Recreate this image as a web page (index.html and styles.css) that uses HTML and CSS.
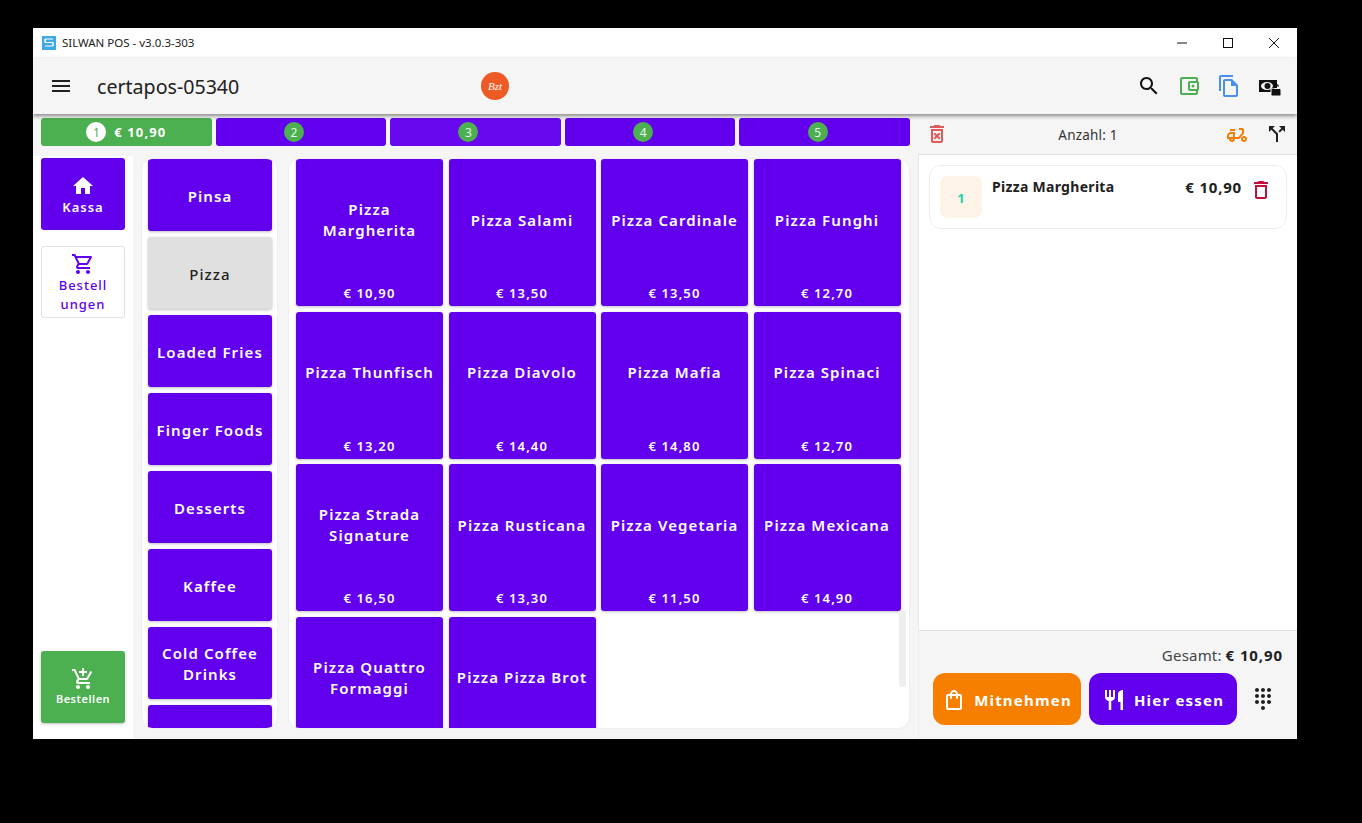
FILE: index.html
```html
<!DOCTYPE html>
<html lang="de">
<head>
  <meta charset="UTF-8" />
  <meta name="viewport" content="width=device-width, initial-scale=1"/>
  <title>SILWAN POS</title>
  <link rel="stylesheet" href="styles.css">
</head>
<body>

<div class="window">

  <!-- Title bar -->
  <div class="titlebar">
    <svg class="app-icon" viewBox="0 0 14 14">
      <rect width="14" height="14" fill="#3fa9e8"/>
      <path d="M11 3H3v3.500h8v3.500H3M3 3v3.500M11 6.500v3.500" fill="none" stroke="#fff" stroke-width="1"/>
    </svg>
    <span class="app-name">SILWAN POS - v3.0.3-303</span>
    <div class="win-btns">
      <div class="win-btn"><svg viewBox="0 0 12 12"><path d="M1 6h10" stroke="#111" fill="none"/></svg></div>
      <div class="win-btn"><svg viewBox="0 0 12 12"><rect x="1.500" y="1.500" width="9" height="9" stroke="#111" fill="none"/></svg></div>
      <div class="win-btn"><svg viewBox="0 0 12 12"><path d="M1 1l10 10M11 1L1 11" stroke="#111" fill="none"/></svg></div>
    </div>
  </div>

  <!-- App bar -->
  <div class="appbar">
    <div class="menu-btn">
      <svg class="ic" viewBox="0 0 24 24"><path d="M3 18h18v-2H3v2zm0-5h18v-2H3v2zm0-7v2h18V6H3z"/></svg>
    </div>
    <div class="shop-name">certapos-05340</div>
    <div class="shop-logo">Bzt</div>
    <div class="bar-icons">
      <div class="bar-icon"><svg class="ic" viewBox="0 0 24 24"><path d="M15.500 14h-.79l-.28-.27C15.410 12.590 16 11.110 16 9.500 16 5.910 13.090 3 9.500 3S3 5.910 3 9.500 5.910 16 9.500 16c1.610 0 3.090-.59 4.230-1.570l.27.28v.79l5 4.990L20.490 19l-4.990-5zm-6 0C7.010 14 5 11.990 5 9.500S7.010 5 9.500 5 14 7.010 14 9.500 11.990 14 9.500 14z"/></svg></div>
      <div class="bar-icon green"><svg class="ic" viewBox="0 0 24 24"><path d="M21 7.280V5c0-1.100-.9-2-2-2H5c-1.110 0-2 .9-2 2v14c0 1.100.89 2 2 2h14c1.100 0 2-.9 2-2v-2.280c.59-.35 1-.98 1-1.720V9c0-.74-.41-1.380-1-1.720zM20 9v6h-7V9h7zM5 19V5h14v2h-6c-1.100 0-2 .9-2 2v6c0 1.100.9 2 2 2h6v2H5z"/><circle cx="16" cy="12" r="1.500"/></svg></div>
      <div class="bar-icon blue"><svg class="ic" viewBox="0 0 24 24"><path d="M16 1H4c-1.100 0-2 .9-2 2v14h2V3h12V1zm-1 4H8c-1.100 0-1.990.9-1.990 2L6 21c0 1.100.89 2 1.990 2H19c1.100 0 2-.9 2-2V11l-6-6zM8 21V7h6v5h5v9H8z"/></svg></div>
      <div class="bar-icon"><svg class="ic" viewBox="0 0 24 24"><rect x="2" y="6" width="18" height="12"/><ellipse cx="10" cy="12" rx="6" ry="4" fill="#f5f5f5"/><circle cx="10.500" cy="12" r="3"/><rect x="14" y="14.500" width="10" height="7.500" rx="1.500" stroke="#f5f5f5" stroke-width="1"/><path d="M16.500 14.500v-1.200a2.500 2.500 0 0 1 4.900-.7" fill="none" stroke="#111" stroke-width="1.400"/></svg></div>
    </div>
  </div>

  <div class="main">

    <!-- Order tabs + catalogue -->
    <div class="left">
      <div class="tabs">
        <div class="tab tab-on"><span class="tab-num num-on">1</span><span class="tab-sum">€ 10,90</span></div>
        <div class="tab"><span class="tab-num">2</span><span class="tab-sum"></span></div>
        <div class="tab tab-light"><span class="tab-num">3</span><span class="tab-sum"></span></div>
        <div class="tab"><span class="tab-num">4</span><span class="tab-sum"></span></div>
        <div class="tab"><span class="tab-num">5</span><span class="tab-sum"></span></div>
      </div>

      <div class="content">
        <div class="nav">
          <div class="nav-btn nav-active">
            <svg class="ic" viewBox="0 0 24 24"><path d="M10 20v-6h4v6h5v-8h3L12 3 2 12h3v8z"/></svg>
            <span>Kassa</span>
          </div>
          <div class="nav-btn nav-plain">
            <svg class="ic" viewBox="0 0 24 24"><path d="M15.550 13c.75 0 1.410-.41 1.750-1.030l3.580-6.490c.37-.66-.11-1.480-.87-1.480H5.210l-.94-2H1v2h2l3.600 7.590-1.350 2.440C4.520 15.370 5.480 17 7 17h12v-2H7l1.100-2h7.450zM6.160 6h12.150l-2.760 5H8.530L6.160 6zM7 18c-1.100 0-1.990.9-1.990 2S5.900 22 7 22s2-.9 2-2-.9-2-2-2zm10 0c-1.100 0-1.990.9-1.990 2s.89 2 1.990 2 2-.9 2-2-.9-2-2-2z"/></svg>
            <span>Bestell<br>ungen</span>
          </div>
          <div class="nav-btn nav-order">
            <svg class="ic" viewBox="0 0 24 24"><path d="M11 9h2V6h3V4h-3V1h-2v3H8v2h3v3zm-4 9c-1.100 0-1.990.9-1.990 2S5.900 22 7 22s2-.9 2-2-.9-2-2-2zm10 0c-1.100 0-1.990.9-1.990 2s.89 2 1.990 2 2-.9 2-2-.9-2-2-2zm-9.830-3.250l.03-.12.9-1.630h7.450c.75 0 1.410-.41 1.750-1.030l3.860-7.010L19.420 4h-.01l-1.100 2-2.760 5H8.530l-.13-.27L6.160 6l-.95-2-.94-2H1v2h2l3.600 7.590-1.350 2.450c-.16.28-.25.61-.25.96 0 1.100.9 2 2 2h12v-2H7.420c-.13 0-.25-.11-.25-.25z"/></svg>
            <span>Bestellen</span>
          </div>
        </div>

        <div class="cats">
          <div class="cat">Pinsa</div>
          <div class="cat cat-active">Pizza</div>
          <div class="cat">Loaded Fries</div>
          <div class="cat">Finger Foods</div>
          <div class="cat">Desserts</div>
          <div class="cat">Kaffee</div>
          <div class="cat">Cold Coffee Drinks</div>
          <div class="cat"></div>
        </div>

        <div class="products">
          <div class="grid">
            <div class="prod"><div class="prod-name">Pizza Margherita</div><div class="prod-price">€ 10,90</div></div>
            <div class="prod"><div class="prod-name">Pizza Salami</div><div class="prod-price">€ 13,50</div></div>
            <div class="prod"><div class="prod-name">Pizza Cardinale</div><div class="prod-price">€ 13,50</div></div>
            <div class="prod"><div class="prod-name">Pizza Funghi</div><div class="prod-price">€ 12,70</div></div>
            <div class="prod"><div class="prod-name">Pizza Thunfisch</div><div class="prod-price">€ 13,20</div></div>
            <div class="prod"><div class="prod-name">Pizza Diavolo</div><div class="prod-price">€ 14,40</div></div>
            <div class="prod"><div class="prod-name">Pizza Mafia</div><div class="prod-price">€ 14,80</div></div>
            <div class="prod"><div class="prod-name">Pizza Spinaci</div><div class="prod-price">€ 12,70</div></div>
            <div class="prod"><div class="prod-name">Pizza Strada Signature</div><div class="prod-price">€ 16,50</div></div>
            <div class="prod"><div class="prod-name">Pizza Rusticana</div><div class="prod-price">€ 13,30</div></div>
            <div class="prod"><div class="prod-name">Pizza Vegetaria</div><div class="prod-price">€ 11,50</div></div>
            <div class="prod"><div class="prod-name">Pizza Mexicana</div><div class="prod-price">€ 14,90</div></div>
            <div class="prod"><div class="prod-name">Pizza Quattro Formaggi</div></div>
            <div class="prod"><div class="prod-name">Pizza Pizza Brot</div></div>
          </div>
          <div class="scroll-thumb"></div>
        </div>
      </div>
    </div>

    <!-- Cart -->
    <div class="cart">
      <div class="cart-head">
        <svg class="ic cart-clear" viewBox="0 0 24 24"><path d="M14.120 10.470L12 12.590l-2.130-2.120-1.410 1.410L10.590 14l-2.120 2.120 1.410 1.410L12 15.410l2.120 2.120 1.410-1.410L13.410 14l2.120-2.120zM15.500 4l-1-1h-5l-1 1H5v2h14V4zM6 19c0 1.100.9 2 2 2h8c1.100 0 2-.9 2-2V7H6v12zM8 9h8v10H8V9z"/></svg>
        <div class="cart-count">Anzahl: 1</div>
        <svg class="ic cart-moped" viewBox="0 0 24 24"><path d="M19 7c0-1.100-.9-2-2-2h-3v2h3v2.650L13.520 14H10V9H6c-2.210 0-4 1.790-4 4v3h2c0 1.660 1.340 3 3 3s3-1.340 3-3h4.480L19 10.350V7zM4 14v-1c0-1.100.9-2 2-2h2v3H4zm3 3c-.55 0-1-.45-1-1h2c0 .55-.45 1-1 1zM5 6h5v2H5zM19 13c-1.660 0-3 1.340-3 3s1.340 3 3 3 3-1.340 3-3-1.340-3-3-3zm0 4c-.55 0-1-.45-1-1s.45-1 1-1 1 .45 1 1-.45 1-1 1z"/></svg>
        <svg class="ic cart-split" viewBox="0 0 24 24"><path d="M14 4l2.290 2.290-2.880 2.880 1.420 1.420 2.880-2.880L20 10V4zm-4 0H4v6l2.290-2.290 4.710 4.700V20h2v-8.410l-5.290-5.300z"/></svg>
      </div>

      <div class="cart-list">
        <div class="item">
          <div class="item-qty">1</div>
          <div class="item-name">Pizza Margherita</div>
          <div class="item-price">€ 10,90</div>
          <svg class="ic item-del" viewBox="0 0 24 24"><path d="M6 19c0 1.100.9 2 2 2h8c1.100 0 2-.9 2-2V7H6v12zM8 9h8v10H8V9zm7.500-5l-1-1h-5l-1 1H5v2h14V4z"/></svg>
        </div>
      </div>

      <div class="cart-foot">
        <div class="total"><span class="total-label">Gesamt:</span> <b>€ 10,90</b></div>
        <div class="actions">
          <div class="act act-take">
            <svg class="ic" viewBox="0 0 24 24"><path d="M18 6h-2c0-2.210-1.790-4-4-4S8 3.790 8 6H6c-1.100 0-2 .9-2 2v12c0 1.100.9 2 2 2h12c1.100 0 2-.9 2-2V8c0-1.100-.9-2-2-2zm-6-2c1.100 0 2 .9 2 2h-4c0-1.100.9-2 2-2zm6 16H6V8h2v2c0 .55.45 1 1 1s1-.45 1-1V8h4v2c0 .55.45 1 1 1s1-.45 1-1V8h2v12z"/></svg>
            <span>Mitnehmen</span>
          </div>
          <div class="act act-here">
            <svg class="ic" viewBox="0 0 24 24"><path d="M11 9H9V2H7v7H5V2H3v7c0 2.120 1.660 3.840 3.750 3.970V22h2.500v-9.030C11.340 12.840 13 11.120 13 9V2h-2v7zm5-3v8h2.500v8H21V2c-2.760 0-5 2.240-5 4z"/></svg>
            <span>Hier essen</span>
          </div>
          <svg class="ic dialpad" viewBox="0 0 24 24"><path d="M12 19c-1.100 0-2 .9-2 2s.9 2 2 2 2-.9 2-2-.9-2-2-2zM6 1c-1.100 0-2 .9-2 2s.9 2 2 2 2-.9 2-2-.9-2-2-2zm0 6c-1.100 0-2 .9-2 2s.9 2 2 2 2-.9 2-2-.9-2-2-2zm0 6c-1.100 0-2 .9-2 2s.9 2 2 2 2-.9 2-2-.9-2-2-2zm12-8c1.100 0 2-.9 2-2s-.9-2-2-2-2 .9-2 2 .9 2 2 2zm-6 8c-1.100 0-2 .9-2 2s.9 2 2 2 2-.9 2-2-.9-2-2-2zm6 0c-1.100 0-2 .9-2 2s.9 2 2 2 2-.9 2-2-.9-2-2-2zm0-6c-1.100 0-2 .9-2 2s.9 2 2 2 2-.9 2-2-.9-2-2-2zm-6 0c-1.100 0-2 .9-2 2s.9 2 2 2 2-.9 2-2-.9-2-2-2zm0-6c-1.100 0-2 .9-2 2s.9 2 2 2 2-.9 2-2-.9-2-2-2z"/></svg>
        </div>
      </div>
    </div>

  </div>
</div>

</body>
</html>
```

FILE: styles.css
```css
html, body { height:100%; }
body {
  margin:0; background:#000; overflow:hidden;
  padding:28px 0 0 33px; box-sizing:border-box;
  font-family:"Noto Sans", sans-serif; color:#212121;
}
.ic { width:24px; height:24px; fill:currentColor; display:block; flex:none; }

.window {
  width:1264px; height:711px; background:#f5f5f5;
  display:flex; flex-direction:column; overflow:hidden;
}

/* title bar */
.titlebar { height:30px; background:#fff; display:flex; align-items:center; padding-left:9px; flex:none; }
.app-icon { width:14px; height:14px; margin-right:6px; }
.app-name { font-size:11.500px; color:#222; padding-bottom:1px; }
.win-btns { margin-left:auto; display:flex; }
.win-btn { width:46px; height:30px; display:flex; align-items:center; justify-content:center; }
.win-btn svg { width:12px; height:12px; }

/* app bar */
.appbar {
  height:56px; background:#f5f5f5; display:flex; align-items:center; flex:none;
  box-shadow:0 2px 4px rgba(0,0,0,0.45); position:relative;
}
.menu-btn { width:24px; margin:0 24px 0 16px; color:#212121; }
.shop-name { width:384px; font-size:19.600px; color:#212121; padding-top:1px; }
.shop-logo {
  width:28px; height:28px; border-radius:50%; background:#ee5a24; color:#fff;
  font:italic 11px "Liberation Serif", serif; display:flex; align-items:center; justify-content:center;
}
.bar-icons { margin-left:auto; display:flex; padding-right:8px; color:#111; }
.bar-icon { width:40px; display:flex; justify-content:center; }
.green { color:#4caf50; }
.blue { color:#4a8fef; }

.main { flex:1; display:flex; min-height:0; }
.left { width:885px; display:flex; flex-direction:column; flex:none; }

/* order tabs */
.tabs { display:flex; gap:4px; padding:4px 8px 0; margin-bottom:10px; }
.tab {
  flex:1; height:28px; background:#6200ee; border-radius:3px;
  display:flex; align-items:center; justify-content:center; gap:8px;
}
.tab-on { background:#4caf50; }
.tab-light { background:#6808ee; }
.tab-num {
  width:20px; height:20px; border-radius:50%; background:#4caf50; color:#e8f5e9;
  font-size:12px; display:flex; align-items:center; justify-content:center;
}
.num-on { background:#fff; color:#4caf50; }
.tab-sum { color:#fff; font-size:13px; font-weight:700; letter-spacing:1.100px; min-width:6px; }

.content { flex:1; display:flex; min-height:0; }

/* left nav */
.nav { width:100px; background:#fff; padding:2px 8px 16px; box-sizing:border-box; display:flex; flex-direction:column; flex:none; }
.nav-btn {
  height:72px; border-radius:3px; box-sizing:border-box; padding-top:1px;
  display:flex; flex-direction:column; align-items:center; justify-content:center;
  font-size:13px; font-weight:600; letter-spacing:1px; text-align:center;
}
.nav-active { background:#6200ee; color:#fff; margin-bottom:16px; }
.nav-plain { background:#fff; color:#6200ee; border:1px solid #e0e0e0; line-height:19px; font-weight:500; }
.nav-order {
  background:#4caf50; color:#fff; margin-top:auto; font-size:11px; letter-spacing:.5px;
  box-shadow:0 1px 3px rgba(0,0,0,0.25); padding:0 0 2px;
}

/* categories */
.cats {
  width:137px; margin:2px 0 10px 8px; padding:0 5px 0 6px; box-sizing:border-box;
  background:#fff; border:1px solid #eee; border-radius:12px;
  overflow:hidden; display:flex; flex-direction:column; gap:6px; flex:none;
}
.cat {
  height:72px; flex:none; background:#6200ee; color:#fff; border-radius:3px; box-sizing:border-box; padding-top:2px;
  display:flex; align-items:center; justify-content:center; text-align:center;
  font-size:15px; font-weight:600; letter-spacing:1.100px; line-height:21px;
  box-shadow:0 1px 3px rgba(0,0,0,0.25);
}
.cat-active { background:#e0e0e0; color:#212121; font-weight:500; }

/* products */
.products {
  width:622px; margin:2px 0 10px 10px; padding:0 0 0 7px; box-sizing:border-box;
  background:#fff; border:1px solid #eee; border-radius:12px;
  overflow:hidden; position:relative; flex:none;
}
.grid { display:grid; grid-template-columns:repeat(4, 147px); column-gap:5.500px; row-gap:5.600px; }
.prod {
  height:147px; background:#6200ee; color:#fff; border-radius:3px;
  display:flex; flex-direction:column; box-shadow:0 1px 3px rgba(0,0,0,0.25);
}
.prod-name {
  height:120px; flex:none; padding:2px 6px 0; box-sizing:border-box; display:flex; align-items:center; justify-content:center; text-align:center;
  font-size:15px; font-weight:600; letter-spacing:1.100px; line-height:21px;
}
.prod-price { text-align:center; font-size:13px; font-weight:600; letter-spacing:1.100px; line-height:27px; padding-top:1px; }
.scroll-thumb { position:absolute; right:3px; top:451px; width:7px; height:77px; background:#eee; border-radius:4px; }

/* cart */
.cart { flex:1; display:flex; flex-direction:column; min-width:0; }
.cart-head {
  height:41px; box-sizing:border-box; border-bottom:1px solid #e0e0e0; flex:none;
  display:flex; align-items:center; padding-top:1px;
}
.cart-clear { color:#e05a5a; margin:-2px 0 0 7px; }
.cart-count { width:270px; text-align:center; font-size:13.500px; letter-spacing:.2px; color:#333; margin-left:4px; }
.cart-moped { color:#f57c00; margin-left:2px; }
.cart-split { color:#212121; margin:-1px 0 0 16px; }
.cart-list { flex:1; background:#fff; border-left:1px solid #e8e8e8; padding:10px 10px 0; min-height:0; }
.item {
  height:64px; box-sizing:border-box; border:1px solid #eee; border-radius:12px;
  display:flex; padding:10px; background:#fff;
}
.item-qty {
  width:42px; height:42px; background:#fdf3e6; border-radius:8px; color:#1dd1b0; font-size:13px; font-weight:700;
  display:flex; align-items:center; justify-content:center; flex:none; padding-top:2px; box-sizing:border-box;
}
.item-name { margin-left:10px; font-size:14px; font-weight:700; line-height:20px; letter-spacing:.3px; flex:1; padding-top:1px; }
.item-price { font-size:15px; font-weight:700; line-height:22px; letter-spacing:.8px; }
.item .item-del { color:#c2103c; margin:2px 3px 0 7px; }

.cart-foot { height:109px; box-sizing:border-box; border-top:1px solid #e0e0e0; border-left:1px solid #eee; flex:none; padding:14px 14px 0 14px; }
.total { text-align:right; font-size:15px; line-height:20px; margin-bottom:8px; }
.total-label { color:#444; letter-spacing:.2px; }
.total b { letter-spacing:.9px; }
.actions { display:flex; align-items:center; gap:8px; }
.act {
  width:148px; height:52px; border-radius:12px; color:#fff; flex:none;
  display:flex; align-items:center; justify-content:center; gap:8px;
  font-size:15px; font-weight:700; letter-spacing:1.200px; padding-top:1px; box-sizing:border-box;
}
.act-take { background:#f77f00; }
.act-here { background:#6200ee; }
.dialpad { color:#212121; margin-left:6px; }
```
